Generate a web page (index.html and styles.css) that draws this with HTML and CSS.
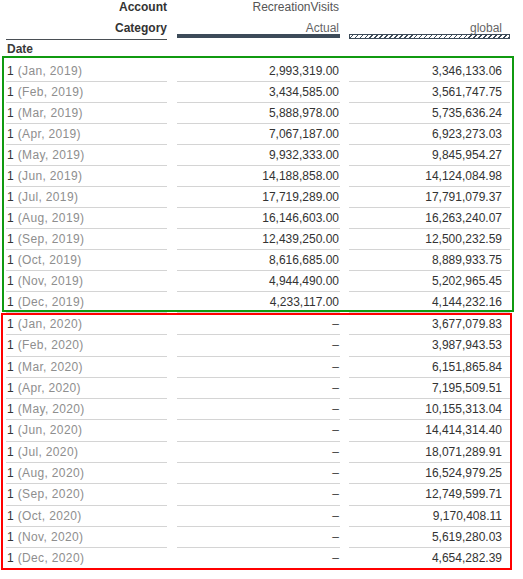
FILE: index.html
```html
<!DOCTYPE html>
<html>
<head>
<meta charset="utf-8">
<link rel="stylesheet" href="styles.css">
</head>
<body>
<div class="table">
  <div class="head">
    <div class="hcell c1"><div class="l1 strong">Account</div><div class="l2 strong">Category</div><div class="rule"></div></div>
    <div class="hcell c2"><div class="l1 measure">RecreationVisits</div><div class="l2 ver">Actual</div><div class="bar"></div></div>
    <div class="hcell c3"><div class="l1"></div><div class="l2 ver">global</div><div class="hatch"></div></div>
  </div>
  <div class="daterow">Date</div>
  <div class="group group-a">
    <div class="row"><div class="cell c1"><span class="n">1</span> <span class="m">(Jan, 2019)</span></div><div class="cell c2">2,993,319.00</div><div class="cell c3">3,346,133.06</div></div>
    <div class="row"><div class="cell c1"><span class="n">1</span> <span class="m">(Feb, 2019)</span></div><div class="cell c2">3,434,585.00</div><div class="cell c3">3,561,747.75</div></div>
    <div class="row"><div class="cell c1"><span class="n">1</span> <span class="m">(Mar, 2019)</span></div><div class="cell c2">5,888,978.00</div><div class="cell c3">5,735,636.24</div></div>
    <div class="row"><div class="cell c1"><span class="n">1</span> <span class="m">(Apr, 2019)</span></div><div class="cell c2">7,067,187.00</div><div class="cell c3">6,923,273.03</div></div>
    <div class="row"><div class="cell c1"><span class="n">1</span> <span class="m">(May, 2019)</span></div><div class="cell c2">9,932,333.00</div><div class="cell c3">9,845,954.27</div></div>
    <div class="row"><div class="cell c1"><span class="n">1</span> <span class="m">(Jun, 2019)</span></div><div class="cell c2">14,188,858.00</div><div class="cell c3">14,124,084.98</div></div>
    <div class="row"><div class="cell c1"><span class="n">1</span> <span class="m">(Jul, 2019)</span></div><div class="cell c2">17,719,289.00</div><div class="cell c3">17,791,079.37</div></div>
    <div class="row"><div class="cell c1"><span class="n">1</span> <span class="m">(Aug, 2019)</span></div><div class="cell c2">16,146,603.00</div><div class="cell c3">16,263,240.07</div></div>
    <div class="row"><div class="cell c1"><span class="n">1</span> <span class="m">(Sep, 2019)</span></div><div class="cell c2">12,439,250.00</div><div class="cell c3">12,500,232.59</div></div>
    <div class="row"><div class="cell c1"><span class="n">1</span> <span class="m">(Oct, 2019)</span></div><div class="cell c2">8,616,685.00</div><div class="cell c3">8,889,933.75</div></div>
    <div class="row"><div class="cell c1"><span class="n">1</span> <span class="m">(Nov, 2019)</span></div><div class="cell c2">4,944,490.00</div><div class="cell c3">5,202,965.45</div></div>
    <div class="row"><div class="cell c1"><span class="n">1</span> <span class="m">(Dec, 2019)</span></div><div class="cell c2">4,233,117.00</div><div class="cell c3">4,144,232.16</div></div>
  </div>
  <div class="group group-b">
    <div class="row"><div class="cell c1"><span class="n">1</span> <span class="m">(Jan, 2020)</span></div><div class="cell c2 dash">–</div><div class="cell c3">3,677,079.83</div></div>
    <div class="row"><div class="cell c1"><span class="n">1</span> <span class="m">(Feb, 2020)</span></div><div class="cell c2 dash">–</div><div class="cell c3">3,987,943.53</div></div>
    <div class="row"><div class="cell c1"><span class="n">1</span> <span class="m">(Mar, 2020)</span></div><div class="cell c2 dash">–</div><div class="cell c3">6,151,865.84</div></div>
    <div class="row"><div class="cell c1"><span class="n">1</span> <span class="m">(Apr, 2020)</span></div><div class="cell c2 dash">–</div><div class="cell c3">7,195,509.51</div></div>
    <div class="row"><div class="cell c1"><span class="n">1</span> <span class="m">(May, 2020)</span></div><div class="cell c2 dash">–</div><div class="cell c3">10,155,313.04</div></div>
    <div class="row"><div class="cell c1"><span class="n">1</span> <span class="m">(Jun, 2020)</span></div><div class="cell c2 dash">–</div><div class="cell c3">14,414,314.40</div></div>
    <div class="row"><div class="cell c1"><span class="n">1</span> <span class="m">(Jul, 2020)</span></div><div class="cell c2 dash">–</div><div class="cell c3">18,071,289.91</div></div>
    <div class="row"><div class="cell c1"><span class="n">1</span> <span class="m">(Aug, 2020)</span></div><div class="cell c2 dash">–</div><div class="cell c3">16,524,979.25</div></div>
    <div class="row"><div class="cell c1"><span class="n">1</span> <span class="m">(Sep, 2020)</span></div><div class="cell c2 dash">–</div><div class="cell c3">12,749,599.71</div></div>
    <div class="row"><div class="cell c1"><span class="n">1</span> <span class="m">(Oct, 2020)</span></div><div class="cell c2 dash">–</div><div class="cell c3">9,170,408.11</div></div>
    <div class="row"><div class="cell c1"><span class="n">1</span> <span class="m">(Nov, 2020)</span></div><div class="cell c2 dash">–</div><div class="cell c3">5,619,280.03</div></div>
    <div class="row"><div class="cell c1"><span class="n">1</span> <span class="m">(Dec, 2020)</span></div><div class="cell c2 dash">–</div><div class="cell c3">4,654,282.39</div></div>
  </div>
</div>
<div class="box box-green"></div>
<div class="box box-red"></div>
</body>
</html>
```
FILE: styles.css
```css
html, body {
  margin: 0;
  padding: 0;
  background: #ffffff;
  overflow: hidden;
}
body {
  font-family: "Liberation Sans", Arial, sans-serif;
  font-size: 12px;
  color: #333333;
  position: relative;
  width: 523px;
  height: 579px;
}
.table {
  padding-left: 6px;
}
.head, .row {
  display: grid;
  grid-template-columns: 162px 163px 161px;
  column-gap: 9px;
}
.head {
  margin-top: -3px;
}
.hcell {
  display: flex;
  flex-direction: column;
  text-align: right;
}
.hcell.c1 { margin-right: 1px; }
.l1 {
  line-height: 21px;
  height: 21px;
  white-space: nowrap;
}
.l2 {
  line-height: 20px;
  height: 16px;
  white-space: nowrap;
}
.strong {
  font-weight: bold;
  color: #333333;
}
.measure { color: #555555; }
.ver { color: #666666; }
.c2 .l1, .c2 .l2 { padding-right: 1px; }
.c3 .l2 { padding-right: 8px; }
.rule {
  height: 5px;
  border-bottom: 1px solid #4a4f55;
}
.bar {
  height: 4px;
  background: #3d4b59;
  margin-bottom: 2px;
}
.hatch {
  height: 3px;
  border: 1px solid #3d4b59;
  background: repeating-linear-gradient(-45deg, #3d4b59 0 1px, #ffffff 1px 3.5px);
}
.daterow {
  height: 21px;
  line-height: 19px;
  font-weight: bold;
  color: #3a3a3a;
  padding-left: 1px;
  box-sizing: border-box;
}
.group-a .row { height: 21px; }
.group-b { margin-top: 1px; }
.group-b .row { height: 21.3px; }
.cell {
  box-sizing: border-box;
  height: 100%;
  padding-top: 1px;
  line-height: 18px;
  border-bottom: 1px solid #d4d4d4;
  white-space: nowrap;
  color: #333333;
}
.cell.c1 {
  margin-right: 1px;
  padding-left: 1px;
  letter-spacing: 0.35px;
}
.cell.c2 {
  text-align: right;
  padding-right: 1px;
}
.cell.c3 {
  text-align: right;
  padding-right: 8px;
}
.n { color: #333333; }
.m { color: #8e8e8e; }
.dash { color: #444444; }
.box {
  position: absolute;
  box-sizing: border-box;
  border: 2px solid;
}
.box-green {
  left: 2px;
  top: 56px;
  width: 512px;
  height: 256px;
  border-color: #109a10;
}
.box-red {
  left: 1px;
  top: 313px;
  width: 511px;
  height: 257px;
  border-color: #ff0000;
}
```
